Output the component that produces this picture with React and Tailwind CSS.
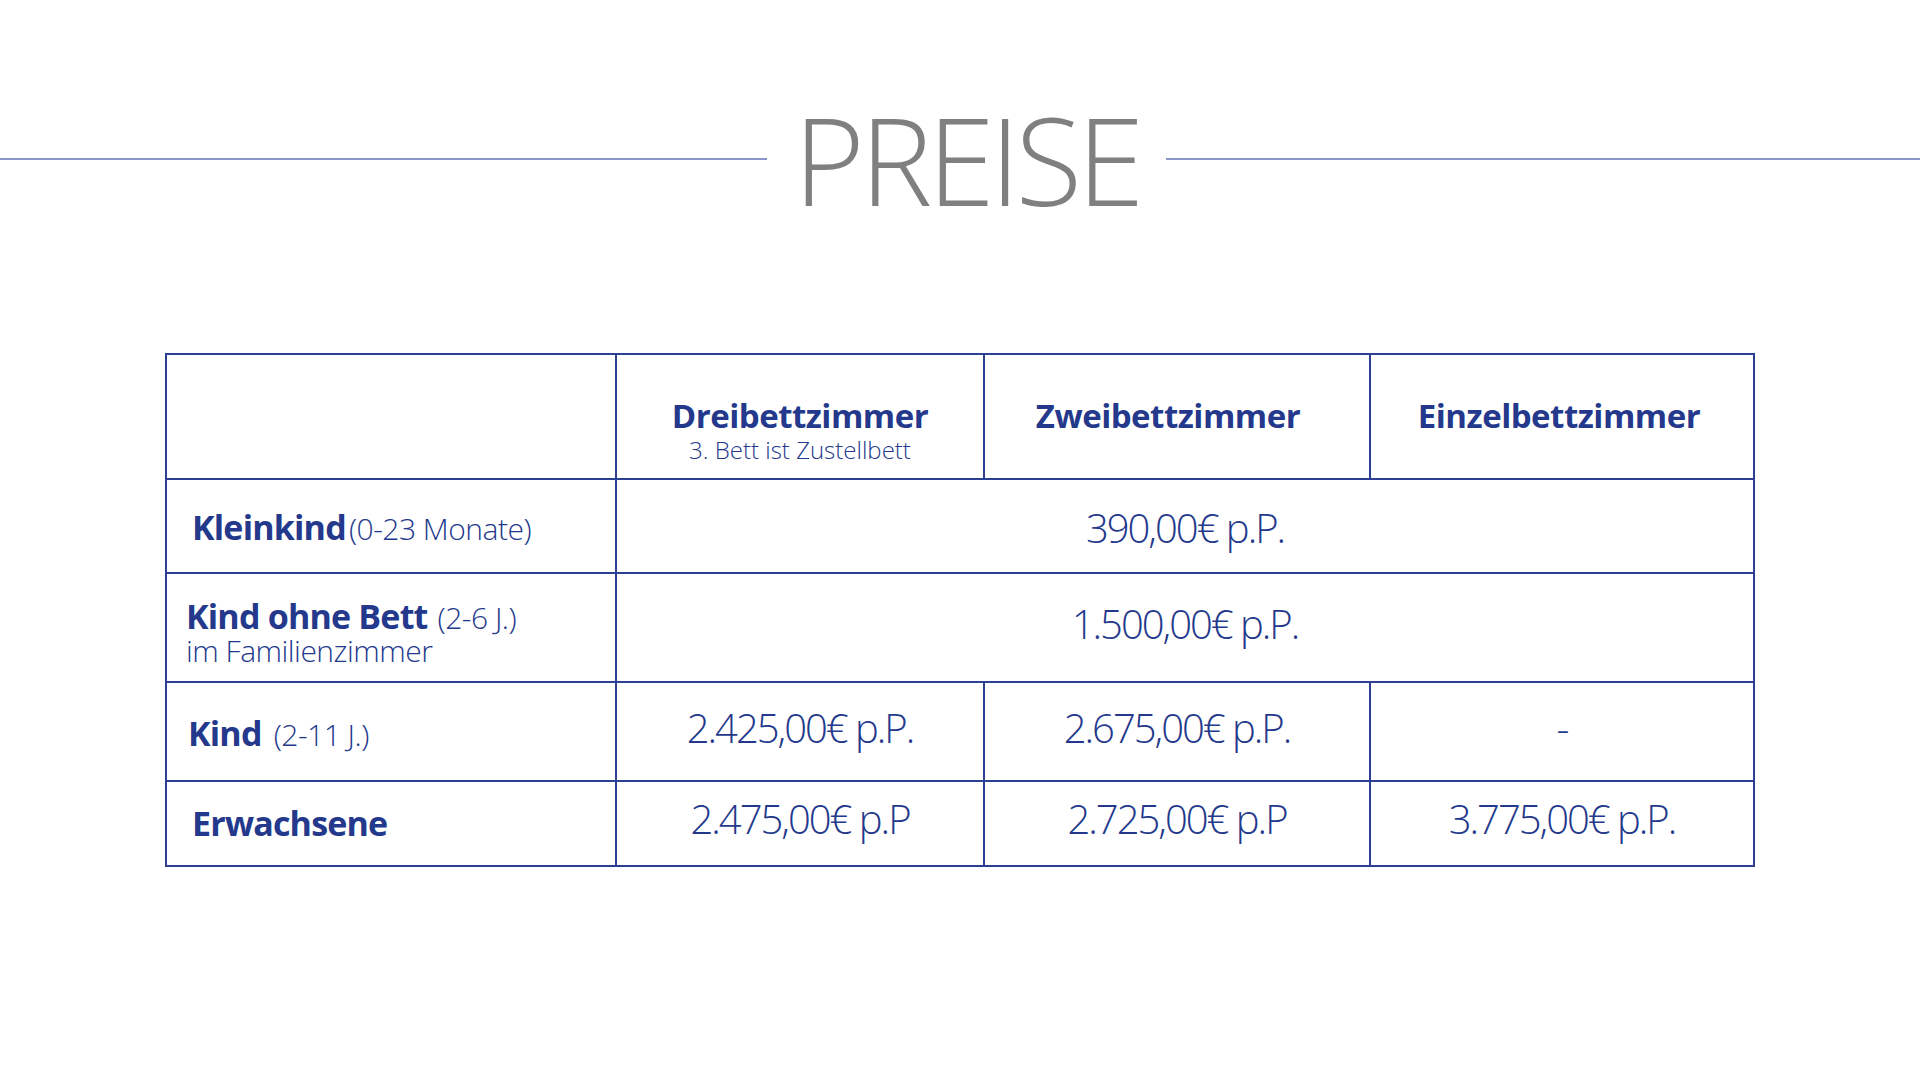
import React from 'react'

const rows = [
  { label: 'Kleinkind', note: '(0-23 Monate)', span: '390,00€ p.P.', pl: 'pl-[25px]', gap: 'ml-[3px]', shift: 'pt-[4px]', lshift: 'pt-[4px]' },
  { label: 'Kind ohne Bett', note: '(2-6 J.)', sub: 'im Familienzimmer', span: '1.500,00€ p.P.', pl: 'pl-[19px]', gap: 'ml-[10px]', shift: 'pb-[8px]', lshift: 'pt-[10px]' },
  { label: 'Kind', note: '(2-11 J.)', prices: ['2.425,00€ p.P.', '2.675,00€ p.P.', '-'], pl: 'pl-[21px]', gap: 'ml-[12px]', shift: 'pb-[8px]', lshift: 'pt-[4px]' },
  { label: 'Erwachsene', prices: ['2.475,00€ p.P', '2.725,00€ p.P', '3.775,00€ p.P.'], pl: 'pl-[25px]', gap: 'ml-0', shift: 'pb-[10px]', lshift: 'pb-[2px]' },
]

const Cell = ({ className = '', children }) => (
  <div className={`border-b-2 border-r-2 border-[#2d3f93] ${className}`}>{children}</div>
)

const Price = ({ children }) => (
  <span className="text-[40px] font-light leading-none tracking-[-2px]">{children}</span>
)

const App = () => {
  return (
    <div className="min-h-screen w-full bg-white font-['Open_Sans',sans-serif] text-[#24398c]">
      {/* heading with the two rules */}
      <div className="flex items-center pt-[99px]">
        <div className="h-[2px] w-[767px] bg-[#8a95c8]" />
        <h1 className="w-[399px] text-center text-[122px] font-light leading-[120px] tracking-[-5px] text-[#808080]">
          PREISE
        </h1>
        <div className="h-[2px] flex-1 bg-[#8a95c8]" />
      </div>

      <div className="mx-auto mt-[134px] grid w-[1590px] grid-cols-[450px_368px_386px_384px] grid-rows-[125px_94px_109px_99px_85px] border-l-2 border-t-2 border-[#2d3f93]">
        <Cell />
        <Cell className="flex flex-col items-center pt-[45px]">
          <span className="text-[33px] font-bold leading-[31px] tracking-[-0.5px]">Dreibettzimmer</span>
          <span className="text-[24px] font-light leading-[38px]">3. Bett ist Zustellbett</span>
        </Cell>
        <Cell className="flex flex-col items-center pt-[45px] pr-[18px]">
          <span className="text-[33px] font-bold leading-[31px] tracking-[-0.5px]">Zweibettzimmer</span>
        </Cell>
        <Cell className="flex flex-col items-center pt-[45px] pr-[6px]">
          <span className="text-[33px] font-bold leading-[31px] tracking-[-0.5px]">Einzelbettzimmer</span>
        </Cell>

        {rows.map((row) => (
          <React.Fragment key={row.label}>
            <Cell className={`flex flex-col justify-center ${row.pl} ${row.lshift}`}>
              <div className="flex items-baseline leading-[34px]">
                <span className="text-[34px] font-bold tracking-[-0.8px]">{row.label}</span>
                {row.note && <span className={`${row.gap} text-[30px] font-light tracking-[-0.5px]`}>{row.note}</span>}
              </div>
              {row.sub && <div className="text-[30px] font-light leading-[32px] tracking-[-0.5px]">{row.sub}</div>}
            </Cell>
            {row.span ? (
              <Cell className={`col-span-3 flex items-center justify-center ${row.shift}`}>
                <Price>{row.span}</Price>
              </Cell>
            ) : (
              row.prices.map((p, i) => (
                <Cell key={i} className={`flex items-center justify-center ${row.shift}`}>
                  <Price>{p}</Price>
                </Cell>
              ))
            )}
          </React.Fragment>
        ))}
      </div>
    </div>
  )
}

export default App
